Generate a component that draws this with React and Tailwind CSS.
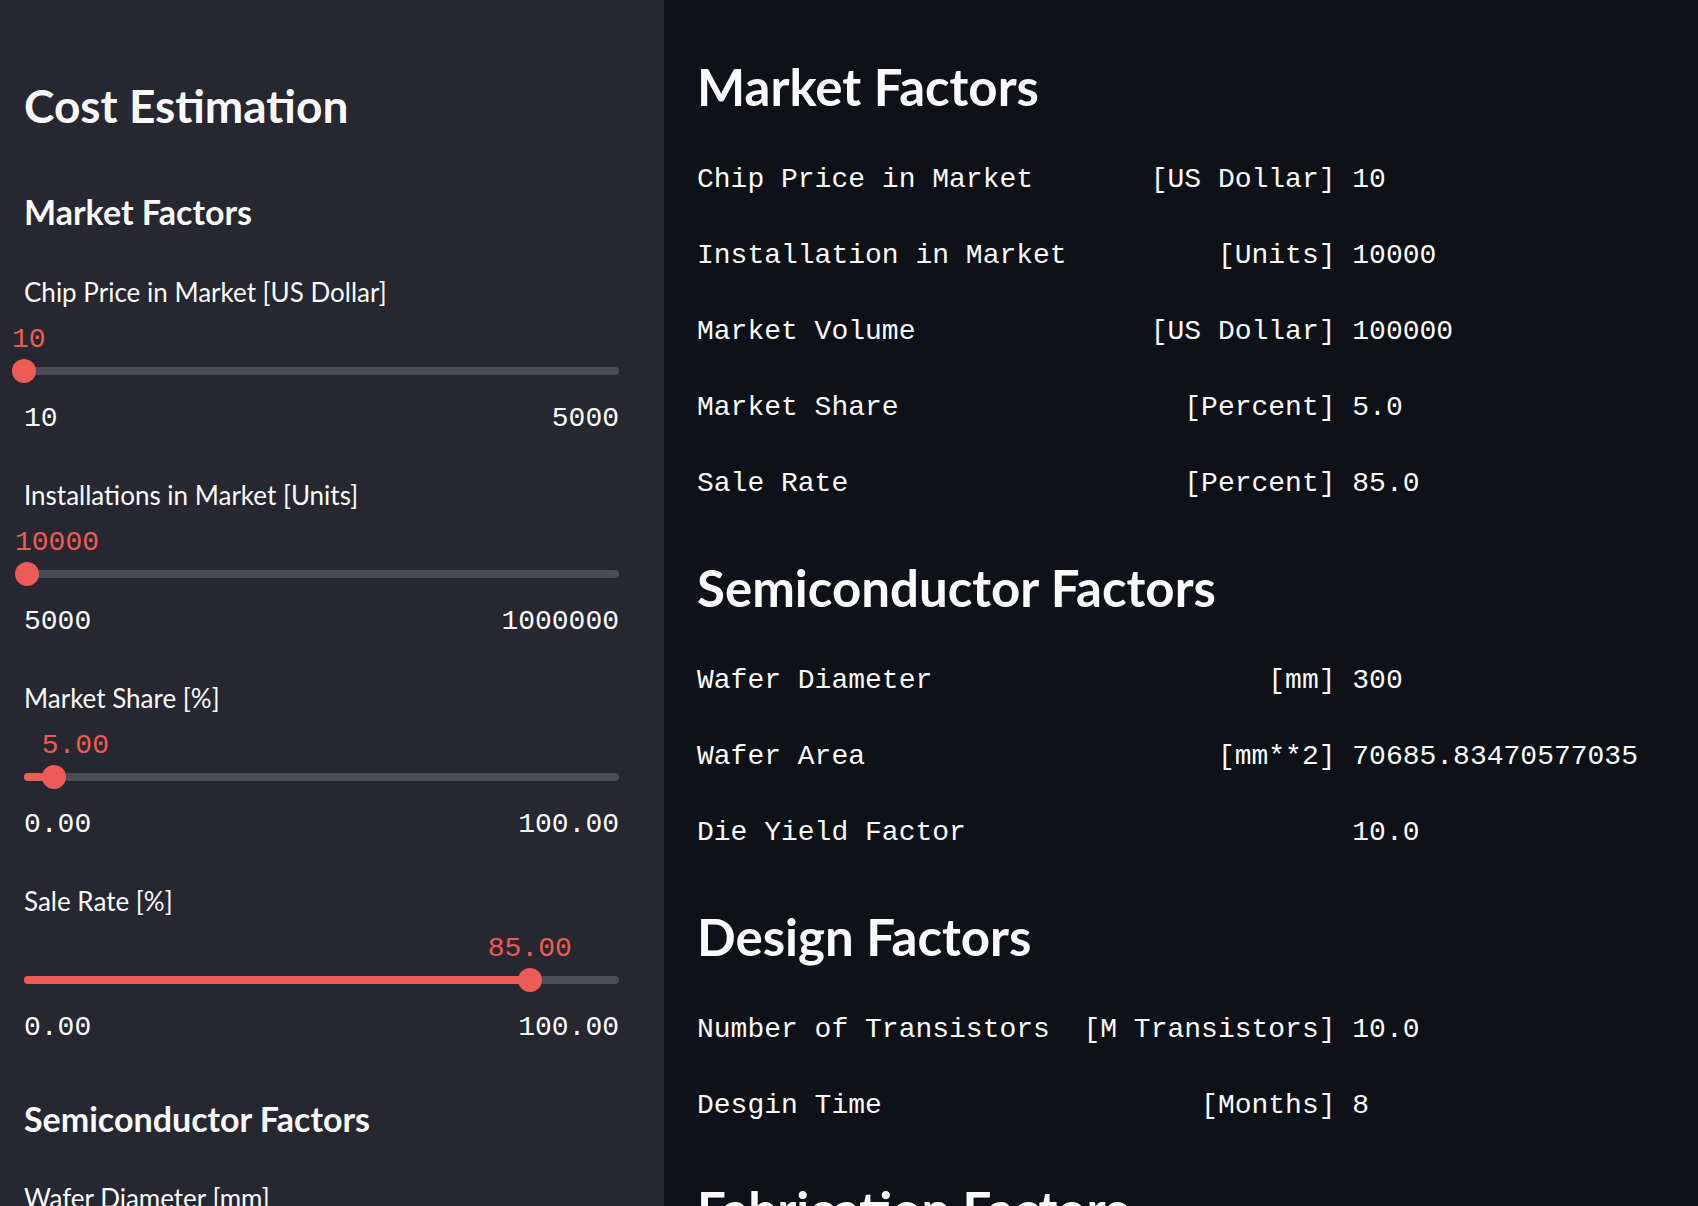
const sliders = [
  { label: "Chip Price in Market [US Dollar]", value: "10", min: "10", max: "5000", frac: 0 },
  { label: "Installations in Market [Units]", value: "10000", min: "5000", max: "1000000", frac: 5000 / 995000 },
  { label: "Market Share [%]", value: "5.00", min: "0.00", max: "100.00", frac: 0.05 },
  { label: "Sale Rate [%]", value: "85.00", min: "0.00", max: "100.00", frac: 0.85 },
];

const sections = [
  {
    title: "Market Factors",
    rows: [
      ["Chip Price in Market", "[US Dollar]", "10"],
      ["Installation in Market", "[Units]", "10000"],
      ["Market Volume", "[US Dollar]", "100000"],
      ["Market Share", "[Percent]", "5.0"],
      ["Sale Rate", "[Percent]", "85.0"],
    ],
  },
  {
    title: "Semiconductor Factors",
    rows: [
      ["Wafer Diameter", "[mm]", "300"],
      ["Wafer Area", "[mm**2]", "70685.83470577035"],
      ["Die Yield Factor", "", "10.0"],
    ],
  },
  {
    title: "Design Factors",
    rows: [
      ["Number of Transistors", "[M Transistors]", "10.0"],
      ["Desgin Time", "[Months]", "8"],
    ],
  },
  { title: "Fabrication Factors", rows: [] },
];

const sans = "font-['Lato','Noto_Sans',sans-serif]";
const mono = "font-['Liberation_Mono','DejaVu_Sans_Mono',monospace]";

function Slider({ label, value, min, max, frac }) {
  const pct = `${frac * 100}%`;
  // value label sits left-aligned on the thumb near the start, centred otherwise
  const leftAligned = frac < 0.1;
  return (
    <div className="pb-[35px]">
      <div className={`${sans} h-[46px] text-[26px] leading-[46px] text-[#fafafa]`}>{label}</div>
      <div className="relative h-[46px]">
        <span
          className={`${mono} absolute top-[2px] text-[28px] leading-[46px] text-[#ec5b55] ${
            leftAligned ? "-translate-x-[12px]" : "-translate-x-1/2"
          }`}
          style={{ left: pct }}
        >
          {value}
        </span>
      </div>
      <div className="relative flex h-[20px] items-center">
        <div className="h-[8px] w-full rounded-full bg-[#4a4c56]">
          <div className="h-full rounded-full bg-[#ec5b55]" style={{ width: pct }} />
        </div>
        <div
          className="absolute top-1/2 h-[24px] w-[24px] -translate-x-1/2 -translate-y-1/2 rounded-full bg-[#ec5b55]"
          style={{ left: pct }}
        />
      </div>
      <div className={`${mono} mt-[18px] mb-[-2px] flex h-[40px] justify-between text-[28px] leading-[40px] text-[#fafafa]`}>
        <span>{min}</span>
        <span>{max}</span>
      </div>
    </div>
  );
}

export default function App() {
  return (
    <div className="flex h-[1206px] w-full overflow-hidden bg-[#0e1117]">
      <aside className="w-[664px] shrink-0 bg-[#262730] pl-[24px] pr-[45px] pt-[76px]">
        <h1 className={`${sans} h-[60px] text-[46px] font-bold leading-[60px] text-[#fafafa]`}>
          Cost Estimation
        </h1>
        <h3 className={`${sans} mt-[51px] h-[50px] text-[34px] font-bold leading-[50px] text-[#fafafa]`}>
          Market Factors
        </h3>
        <div className="mt-[32px]">
          {sliders.map((s) => (
            <Slider key={s.label} {...s} />
          ))}
        </div>
        <h3 className={`${sans} mt-[13px] h-[50px] text-[34px] font-bold leading-[50px] text-[#fafafa]`}>
          Semiconductor Factors
        </h3>
        <div className="mt-[31px]">
          <Slider label="Wafer Diameter [mm]" value="300" min="100" max="450" frac={200 / 350} />
        </div>
      </aside>

      <main className="flex-1 pl-[33px] pt-[57px]">
        {sections.map((sec, i) => (
          <section key={sec.title} className={i > 0 ? "mt-[36px]" : ""}>
            <h2 className={`${sans} h-[60px] text-[51px] font-bold leading-[60px] text-[#fafafa]`}>
              {sec.title}
            </h2>
            <div className="mt-[25px]">
              {sec.rows.map(([name, unit, val]) => (
                <div
                  key={name}
                  className={`${mono} h-[76px] whitespace-pre text-[28px] leading-[76px] text-[#fafafa]`}
                >
                  {name.padEnd(22) + unit.padStart(16) + " " + val}
                </div>
              ))}
            </div>
          </section>
        ))}
      </main>
    </div>
  );
}
